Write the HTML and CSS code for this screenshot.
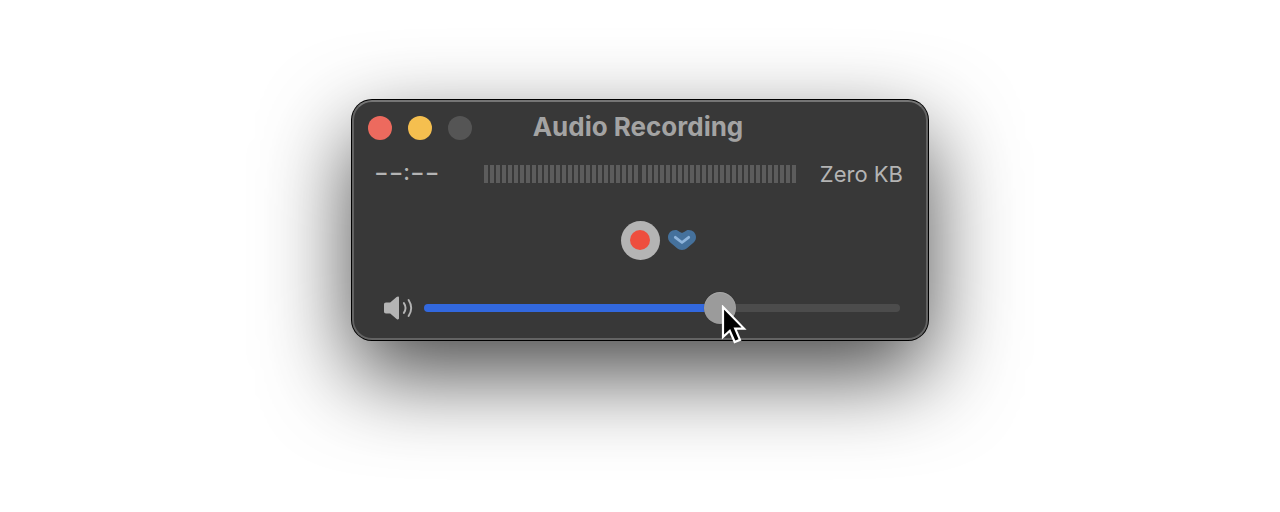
FILE: index.html
```html
<!DOCTYPE html>
<html lang="en">
<head>
<meta charset="utf-8">
<meta name="viewport" content="width=device-width, initial-scale=1">
<title>Audio Recording</title>
<link rel="stylesheet" href="styles.css">
</head>
<body>
<main class="window">
  <header class="titlebar">
    <div class="lights">
      <button class="light light-close" type="button" aria-label="Close"></button>
      <button class="light light-minimize" type="button" aria-label="Minimize"></button>
      <button class="light light-zoom" type="button" aria-label="Zoom" disabled></button>
    </div>
    <h1 class="title">Audio Recording</h1>
  </header>

  <section class="status">
    <span class="time">−−:−−</span>
    <div class="meter" role="img" aria-label="Audio level">
      <span class="bars"></span>
      <span class="bars"></span>
    </div>
    <span class="size">Zero KB</span>
  </section>

  <section class="controls">
    <button class="record" type="button" aria-label="Record"><span class="record-dot"></span></button>
    <button class="options" type="button" aria-label="Recording options">
      <svg width="28" height="20" viewBox="0 0 28 20" aria-hidden="true">
        <path d="M7.500 0C10.500 0 12 2.800 14 2.800S17.500 0 20.500 0C25 0 28 3.200 28 7.200C28 10 26.600 11.700 24.500 13.600L19.500 17.800C16.200 20.700 11.800 20.700 8.500 17.800L3.500 13.600C1.400 11.700 0 10 0 7.200C0 3.200 3 0 7.500 0Z" fill="#45719c"/>
        <path d="M7.300 7.300L14 12.500L20.700 7.300" fill="none" stroke="#8fb5dc" stroke-width="2.800" stroke-linecap="round" stroke-linejoin="round"/>
      </svg>
    </button>
  </section>

  <section class="volume">
    <label class="volume-label" for="volume" aria-label="Volume">
      <svg width="30" height="24" viewBox="0 0 30 24" aria-hidden="true">
        <path d="M2 6.500H6.200L12.600 1.100C13.800 .2 15 .5 15 1.700V22.300C15 23.500 13.800 23.800 12.600 22.900L6.200 17.500H2C.7 17.500 0 16.800 0 15.500V8.500C0 7.200 .7 6.500 2 6.500Z" fill="#b4b4b4"/>
        <path d="M19.900 7.100Q23.200 12 19.900 16.900M24.600 4Q29.800 12 24.600 20" fill="none" stroke="#b4b4b4" stroke-width="1.900" stroke-linecap="round"/>
      </svg>
    </label>
    <div class="slider">
      <input class="range" id="volume" type="range" min="0" max="100" value="63">
      <svg class="pointer" width="26" height="42" viewBox="0 0 26 42" aria-hidden="true">
        <path d="M2 2V32L8.800 25.800L13.700 37L19 34.800L14.200 23.600H23Z" fill="#000" stroke="#fff" stroke-width="2.200"/>
      </svg>
    </div>
  </section>
</main>
</body>
</html>
```
FILE: styles.css
```css
* {
  box-sizing: border-box;
}

body {
  min-height: 100vh;
  margin: 0;
  padding: 100px 16px;
  background: #fff;
  color: #b4b4b4;
  font-family: Inter, "Liberation Sans", sans-serif;
}

button {
  padding: 0;
  border: 0;
  background: none;
}

svg {
  display: block;
}

.window {
  width: 576px;
  max-width: 100%;
  margin: 0 auto;
  padding-bottom: 8px;
  border: 2px solid #636363;
  border-top-color: #757575;
  border-radius: 20px;
  background: #383838;
  box-shadow: 0 0 0 1px #000, 0 34px 88px rgba(0, 0, 0, 0.72);
}

.titlebar {
  display: grid;
  grid-template-columns: 1fr auto 1fr;
  align-items: center;
  height: 52px;
  padding: 0 18px 0 14px;
}

.lights {
  display: flex;
  gap: 16px;
}

.light {
  width: 24px;
  height: 24px;
  border-radius: 50%;
}

.light-close {
  background: #ed6a5e;
}

.light-minimize {
  background: #f5bf4f;
}

.light-zoom {
  background: #555;
}

.title {
  margin: 0;
  padding-bottom: 2px;
  color: #a3a3a3;
  font-size: 26px;
  font-weight: 700;
  line-height: 32px;
}

.status {
  display: flex;
  align-items: center;
  gap: 24px;
  height: 40px;
  padding: 0 23px 0 20px;
  font-size: 22px;
  line-height: 28px;
}

.time {
  flex: 1;
  font-weight: 500;
  font-feature-settings: "case";
}

.meter {
  display: flex;
  gap: 4px;
}

.bars {
  width: 154px;
  height: 18px;
  background: repeating-linear-gradient(to right, #5c5c5c 0 4px, transparent 4px 6px);
}

.controls {
  display: grid;
  grid-template-columns: 1fr auto 1fr;
  align-items: center;
  gap: 8px;
  height: 92px;
}

.record {
  display: grid;
  grid-column: 2;
  place-items: center;
  width: 39px;
  height: 39px;
  border-radius: 50%;
  background: #b4b4b4;
}

.record-dot {
  width: 20px;
  height: 20px;
  border-radius: 50%;
  background: #ee4e3e;
}

.options {
  justify-self: start;
}

.volume {
  display: flex;
  align-items: center;
  gap: 10px;
  height: 44px;
  padding: 0 26px 0 30px;
}

.slider {
  position: relative;
  flex: 1;
}

.range {
  display: block;
  width: 100%;
  height: 32px;
  margin: 0;
  appearance: none;
  background: none;
}

.range::-webkit-slider-runnable-track {
  height: 8px;
  border-radius: 4px;
  background: linear-gradient(to right, #3268de 63%, #4c4c4c 63%);
}

.range::-webkit-slider-thumb {
  width: 32px;
  height: 32px;
  margin-top: -12px;
  appearance: none;
  border-radius: 50%;
  background: #9b9b9b;
  box-shadow: 0 0 1px rgba(0, 0, 0, 0.4), inset 0 1px 1px rgba(255, 255, 255, 0.16);
}

.pointer {
  position: absolute;
  top: 13px;
  left: calc(63% - 3px);
  pointer-events: none;
}
```
